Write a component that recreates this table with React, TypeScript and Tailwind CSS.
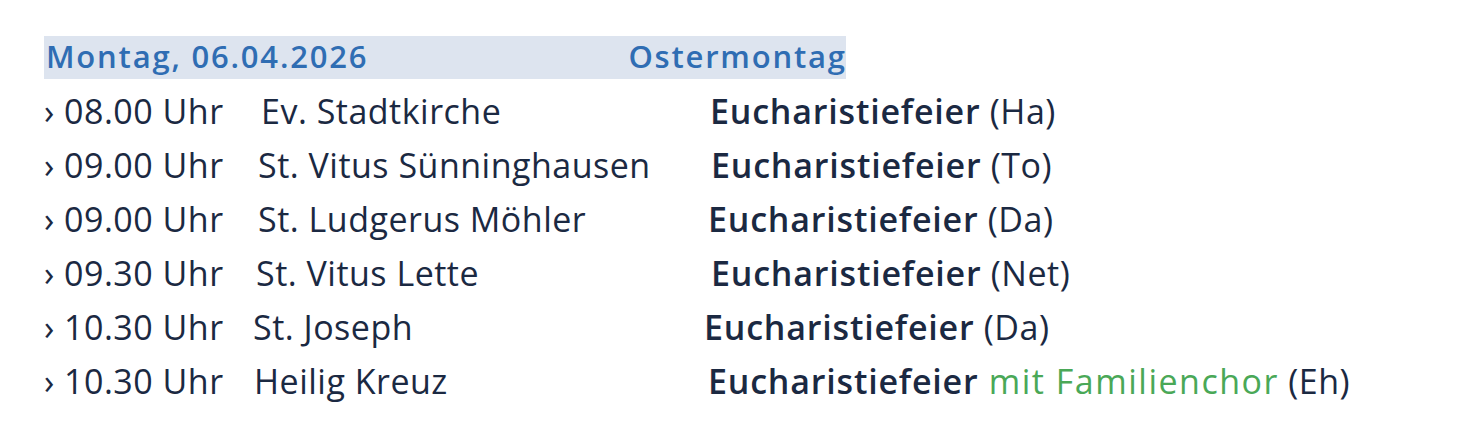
import React from "react";

type Row = {
  time: string;
  place: string;
  placeCls: string;
  extra?: string;
  who: string;
};

const rows: Row[] = [
  { time: "08.00 Uhr", place: "Ev. Stadtkirche", placeCls: "pl-[41px] w-[490px]", who: "(Ha)" },
  { time: "09.00 Uhr", place: "St. Vitus Sünninghausen", placeCls: "pl-[38px] w-[491px]", who: "(To)" },
  { time: "09.00 Uhr", place: "St. Ludgerus Möhler", placeCls: "pl-[38px] w-[488px]", who: "(Da)" },
  { time: "09.30 Uhr", place: "St. Vitus Lette", placeCls: "pl-[36px] w-[491px]", who: "(Net)" },
  { time: "10.30 Uhr", place: "St. Joseph", placeCls: "pl-[33px] w-[484px]", who: "(Da)" },
  { time: "10.30 Uhr", place: "Heilig Kreuz", placeCls: "pl-[34px] w-[488px]", extra: "mit Familienchor", who: "(Eh)" },
];

export default function App() {
  return (
    <div
      className="min-h-[436px] w-[1476px] bg-white pl-[44px] pt-[36px] text-[#1b2942]"
      style={{ fontFamily: '"Open Sans", "Noto Sans", sans-serif' }}
    >
      <div className="flex h-[43px] w-[802px] items-center justify-between bg-[#dde4ef] pb-[3px] pl-[2px] pr-[1px] text-[31px] font-semibold leading-none tracking-[1.8px] text-[#2f6db3]">
        <span>Montag, 06.04.2026</span>
        <span className="-mr-[1.8px]">Ostermontag</span>
      </div>
      <div className="flex flex-col pt-[5px]">
        {rows.map((r, i) => (
          <div key={i} className="flex h-[54px] items-center whitespace-nowrap text-[34px] leading-none tracking-[0.5px]">
            <span className="w-[176px] shrink-0">› {r.time}</span>
            <span className={`${r.placeCls} shrink-0`}>{r.place}</span>
            <span>
              <span className="font-semibold tracking-[0.8px]">Eucharistiefeier</span>
              {r.extra ? <span className="tracking-[1.5px] text-[#4aa857]"> {r.extra}</span> : null}
              <span> {r.who}</span>
            </span>
          </div>
        ))}
      </div>
    </div>
  );
}
